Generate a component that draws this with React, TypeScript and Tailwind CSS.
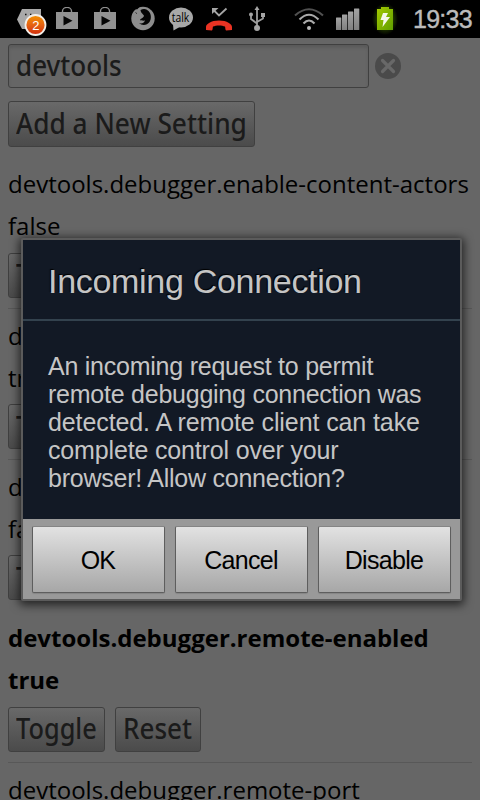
import type { ReactNode } from "react";

function Bag() {
  return (
    <svg width="22" height="24" viewBox="0 0 22 24" className="shrink-0">
      <path d="M6.5 5.500V4a4.500 3.600 0 0 1 9 0v1.500" fill="none" stroke="#8f8f8f" strokeWidth="1.4" />
      <rect x="0" y="5" width="22" height="17" fill="#929292" />
      <path d="M7.5 9v9.500l9-4.700z" fill="#050505" />
    </svg>
  );
}

function StatusBar() {
  return (
    <header className="flex h-[38px] shrink-0 items-center overflow-hidden bg-black pl-[17px] pr-2">
      <svg width="32" height="38" viewBox="0 0 32 38" className="mr-[7px] shrink-0">
        <defs>
          <linearGradient id="badge" x1="0" y1="0" x2="0" y2="1">
            <stop offset="0" stopColor="#f39200" />
            <stop offset="0.5" stopColor="#e56212" />
            <stop offset="1" stopColor="#d02a0c" />
          </linearGradient>
        </defs>
        <path d="M5 9H24V29H5L0 19.500z" fill="#a9a9a9" />
        <path d="M8 14.500h1.500M13 14.500h1.500" stroke="#111" strokeWidth="1.500" />
        <circle cx="18.500" cy="25" r="10" fill="url(#badge)" stroke="#f3eee8" strokeWidth="1.800" />
        <text x="18.800" y="30" textAnchor="middle" fill="#fff" className="font-['Liberation_Sans',sans-serif] text-[13px]">2</text>
      </svg>
      <Bag />
      <div className="w-4 shrink-0" />
      <Bag />
      <svg width="24" height="26" viewBox="0 0 24 26" className="ml-[15px] shrink-0">
        <circle cx="12" cy="12.500" r="11.700" fill="#8d8d8d" />
        <path d="M9.500 4Q14 1.500 17.500 5C20.500 8 20.500 13 18.500 16 16 19.500 11 20 8 17c2.500 1 5 0 6-2.500-2 .500-3-.500-5 0 0-2 3-2 4-4.500C12.500 8 10 7.500 9.500 4z" fill="#050505" />
        <path d="M0 6L1.500 3 3 4.500 4 2.500 6 3.500 9 .500 4-1-1 2z" fill="#000" />
        <path d="M4.500 6.500l1.500 1.200" stroke="#333" strokeWidth="1" />
      </svg>
      <svg width="24" height="26" viewBox="0 0 24 26" className="ml-[14px] shrink-0">
        <ellipse cx="12" cy="11.500" rx="12" ry="10" fill="#a8a8a8" />
        <path d="M4 18l.500 6.500 7-4z" fill="#a8a8a8" />
        <text x="11.500" y="15.800" textAnchor="middle" textLength="17.500" lengthAdjust="spacingAndGlyphs" fill="#000" className="font-['Open_Sans',sans-serif] text-[12.5px]">talk</text>
      </svg>
      <svg width="26" height="26" viewBox="0 0 26 26" className="ml-[13px] shrink-0">
        <path d="M6.500 3L13 9.500 20.500 2.500" fill="none" stroke="#a5a5a5" strokeWidth="1.800" />
        <path d="M6 2h6.500L6 8z" fill="#a5a5a5" />
        <path d="M0 21c0-3 5-6.500 13-6.500S26 18 26 21v3l-6 .500c-1-1-.500-3-1-4-3-1.500-9-1.500-12 0-.500 1 0 3-1 4L0 24z" fill="#ea3323" />
      </svg>
      <svg width="16" height="26" viewBox="0 0 16 26" className="ml-[17px] shrink-0">
        <path d="M8 3v19M2 9v4l6 4.500M14 8v4.500L8 16" fill="none" stroke="#9d9d9d" strokeWidth="1.800" />
        <path d="M8 0l2.500 4h-5z" fill="#a5a5a5" />
        <circle cx="8" cy="22" r="3" fill="#a5a5a5" />
        <circle cx="2" cy="8.500" r="2" fill="#a5a5a5" />
        <rect x="12" y="7" width="4" height="4" fill="#a5a5a5" />
      </svg>
      <svg width="30" height="24" viewBox="0 0 30 24" className="ml-[29px] shrink-0">
        <g fill="none" strokeWidth="2.100">
          <path d="M1 8.500Q15-4 29 8.500" stroke="#515151" />
          <path d="M5.500 12.500Q15 3 24.500 12.500" stroke="#aaa" />
          <path d="M9.500 16.500Q15 10.500 20.500 16.500" stroke="#aaa" />
        </g>
        <circle cx="15" cy="21" r="2" fill="#bbb" />
      </svg>
      <svg width="24" height="22" viewBox="0 0 24 22" className="ml-3 shrink-0">
        <defs>
          <linearGradient id="bars" x1="0" y1="0" x2="0" y2="1">
            <stop offset="0" stopColor="#a3a3a3" />
            <stop offset="1" stopColor="#808080" />
          </linearGradient>
        </defs>
        <g fill="url(#bars)">
          <rect x="0" y="9.500" width="5.300" height="12.500" rx=".5" />
          <rect x="6" y="6.500" width="5.300" height="15.500" rx=".5" />
          <rect x="12" y="3.500" width="5.300" height="18.500" rx=".5" />
          <rect x="18" y="0.500" width="5.300" height="21.500" rx=".5" />
        </g>
      </svg>
      <svg width="32" height="34" viewBox="0 0 32 34" className="ml-[9px] shrink-0">
        <defs>
          <radialGradient id="glow"><stop offset=".5" stopColor="#427000" /><stop offset="1" stopColor="#000" /></radialGradient>
          <linearGradient id="battery" x1="0" y1="0" x2="1" y2="1"><stop offset="0" stopColor="#a6cb00" /><stop offset="1" stopColor="#5e9d00" /></linearGradient>
        </defs>
        <ellipse cx="16" cy="17" rx="13" ry="16" fill="url(#glow)" opacity=".6" />
        <path d="M8 7h4V5h8v2h4v21H8z" fill="url(#battery)" />
        <path d="M14 11h5l-2 4h4l-7.500 10 1-7h-3z" fill="#f5f8ea" />
      </svg>
      <span className="ml-auto whitespace-nowrap font-['Liberation_Sans',sans-serif] text-[25px] leading-none tracking-[-0.7px] text-[#bbb] [-webkit-text-stroke:0.4px_#bbb]">19:33</span>
    </header>
  );
}

function WebButton({ children, className }: { children: ReactNode; className: string }) {
  return (
    <button className={`flex items-center whitespace-nowrap rounded-[3px] border border-[#404040] bg-linear-to-b from-[#696969] to-[#4b4b4b] pb-0.5 pl-[7px] font-['Noto_Sans',sans-serif] text-[28px] font-medium leading-none text-[#1b1b1b] ${className}`}>
      <span className="inline-block origin-left">{children}</span>
    </button>
  );
}

function Setting({ name, value, modified = false, divider = true }: { name: string; value?: string; modified?: boolean; divider?: boolean }) {
  return (
    <li className={`h-[151.33px] shrink-0 border-b pt-[5.7px] text-[24px] leading-[42px] text-black ${divider ? "border-[#585858]" : "border-transparent"} ${modified ? "font-bold" : ""}`}>
      <div className="whitespace-nowrap">{name}</div>
      {value && (
        <>
          <div>{value}</div>
          <div className="mt-[5.3px] flex gap-2.5">
            <WebButton className="h-[45px] w-[97px] *:scale-x-[0.905]">Toggle</WebButton>
            {modified && <WebButton className="h-[45px] w-[86px] *:scale-x-[0.93]">Reset</WebButton>}
          </div>
        </>
      )}
    </li>
  );
}

function DialogButton({ children }: { children: ReactNode }) {
  return (
    <button className="h-[67px] flex-1 rounded-[2px] border border-[#5e5e5e] border-t-[#858585] bg-linear-to-b from-[#e2e2e2] to-[#a7a7a7] pr-px pt-[3px] text-[25px] tracking-[-0.7px] text-black shadow-[0_1px_1px_#858585]">
      {children}
    </button>
  );
}

export default function App() {
  return (
    <div className="relative flex h-[800px] w-[480px] flex-col overflow-hidden bg-[#666] font-['Open_Sans','Noto_Sans',sans-serif]">
      <StatusBar />
      <main className="flex flex-1 flex-col overflow-hidden px-2 pt-1.5">
        <div className="flex shrink-0 items-center gap-1.5">
          <div className="h-11 w-[361px] rounded-[3px] border border-[#404040] pl-[7px] font-['Noto_Sans',sans-serif] text-[28px] font-medium leading-[41px] text-[#1b1b1b] shadow-[inset_0_3px_3px_#5b5b5b]">
            <span className="inline-block origin-left scale-x-[0.93]">devtools</span>
          </div>
          <svg width="26" height="26" viewBox="0 0 26 26">
            <circle cx="13" cy="13" r="13" fill="#4a4a4a" />
            <path d="M7.500 7.500l11 11m0-11l-11 11" stroke="#686868" strokeWidth="3.200" strokeLinecap="round" />
          </svg>
        </div>
        <WebButton className="mt-[13px] h-[46px] w-[247px] shrink-0 *:scale-x-[0.938]">Add a New Setting</WebButton>
        <ul className="mt-[10.7px] flex flex-col">
          <Setting name="devtools.debugger.enable-content-actors" value="false" />
          <Setting name="devtools.debugger.force-local" value="true" />
          <Setting name="devtools.debugger.log" value="false" divider={false} />
          <Setting name="devtools.debugger.remote-enabled" value="true" modified />
          <Setting name="devtools.debugger.remote-port" />
        </ul>
      </main>
      <section role="dialog" className="absolute left-[21px] top-[238px] flex h-[363px] w-[441px] flex-col rounded-[2px] border-2 border-[#5b5b5b] bg-[#121925] font-['Liberation_Sans',sans-serif] text-[#c5c5c5] shadow-[0_2px_10px_2px_rgba(0,0,0,0.65)]">
        <h1 className="h-[81px] shrink-0 border-b-2 border-[#33424e] pl-[25px] pt-0.5 text-[34px] leading-[79px] tracking-[-0.3px] [text-shadow:-1px_-1px_1px_#000]">Incoming Connection</h1>
        <p className="flex-1 whitespace-nowrap pl-[25px] pt-[31px] text-[25px] leading-7 tracking-[-0.24px]">
          An incoming request to permit<br />
          remote debugging connection was<br />
          <span className="tracking-[-0.1px]">detected. A remote client can take</span><br />
          <span className="tracking-[-0.16px]">complete control over your</span><br />
          browser! Allow connection?
        </p>
        <footer className="flex h-20 shrink-0 gap-2.5 bg-[#999] px-[9px] pt-[7px]">
          <DialogButton>OK</DialogButton>
          <DialogButton>Cancel</DialogButton>
          <DialogButton>Disable</DialogButton>
        </footer>
      </section>
    </div>
  );
}
